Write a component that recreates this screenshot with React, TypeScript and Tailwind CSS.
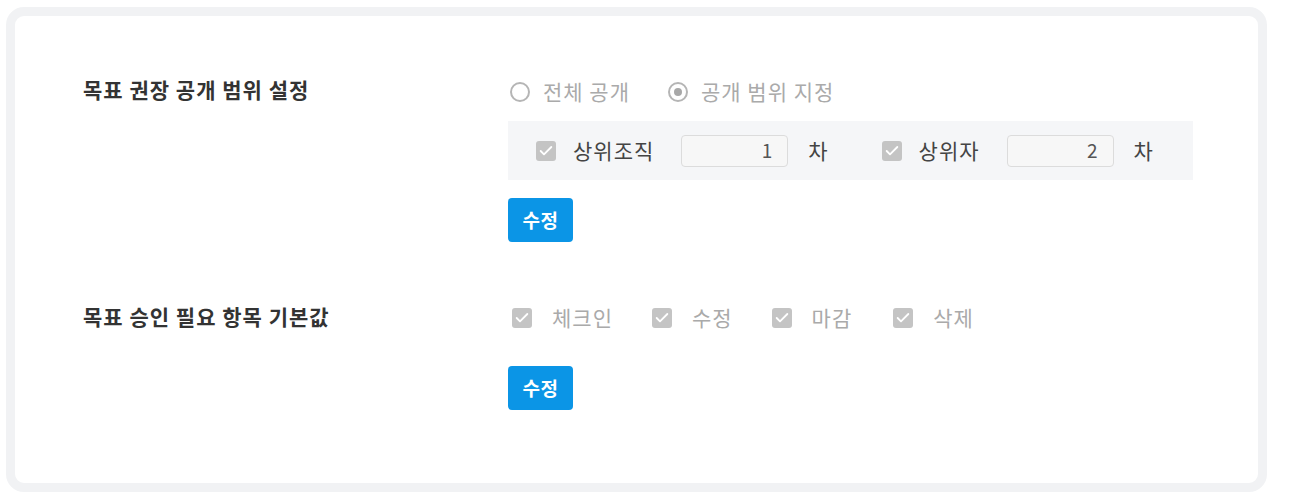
import { Check } from "lucide-react";

const font = { fontFamily: '"Noto Sans CJK KR", "Noto Sans", sans-serif' };

function Box({ className = "" }: { className?: string }) {
  return (
    <span className={`flex h-5 w-5 shrink-0 items-center justify-center rounded-[3px] bg-[#c4c4c4] ${className}`}>
      <Check size={16} strokeWidth={2.75} className="text-white" />
    </span>
  );
}

function Radio({ checked }: { checked?: boolean }) {
  return (
    <span className="flex h-5 w-5 shrink-0 items-center justify-center rounded-full border-2 border-[#b5b5b5] bg-white">
      {checked && <span className="h-2 w-2 rounded-full bg-[#a8a8a8]" />}
    </span>
  );
}

function EditButton() {
  return (
    <button className="flex h-[44px] w-[65px] items-center justify-center rounded-[4px] bg-[#0b95e6] text-[19px] font-bold tracking-[0.5px] text-white">
      수정
    </button>
  );
}

export default function App() {
  const approvals = [
    { label: "체크인", gap: "" },
    { label: "수정", gap: "ml-[39px]" },
    { label: "마감", gap: "ml-[39px]" },
    { label: "삭제", gap: "ml-[41px]" },
  ];

  return (
    <div className="min-h-screen bg-white pl-[6px] pt-[7px]" style={font}>
      <div className="h-[485px] w-[1261px] rounded-[18px] border-[9px] border-[#f1f2f4] bg-white">
        {/* 공개 범위 */}
        <div className="flex pl-[68px] pt-[59px]">
          <div className="w-[425px] text-[21px] font-bold leading-[28px] tracking-[1px] text-[#333]">
            목표 권장 공개 범위 설정
          </div>
          <div className="flex flex-col">
            <div className="mt-[3px] flex h-[28px] items-center pl-[2px] text-[21px] tracking-[1px] text-[#aaa]">
              <label className="flex items-center gap-[13px]">
                <Radio />
                전체 공개
              </label>
              <label className="ml-[38px] flex items-center gap-[13px]">
                <Radio checked />
                공개 범위 지정
              </label>
            </div>
            <div className="mt-[15px] flex h-[59px] w-[685px] items-center bg-[#f5f6f8] pl-[28px] text-[21px] tracking-[1px] text-[#444]">
              <Box />
              <span className="ml-[17px]">상위조직</span>
              <span className="ml-[27px] flex h-[32px] w-[107px] items-center justify-end rounded-[4px] border border-[#dcdcdc] bg-[#f7f7f7] pr-[14px] text-[19px] text-[#555]">
                1
              </span>
              <span className="ml-[20px]">차</span>
              <Box className="ml-[53px]" />
              <span className="ml-[17px]">상위자</span>
              <span className="ml-[27px] flex h-[32px] w-[107px] items-center justify-end rounded-[4px] border border-[#dcdcdc] bg-[#f7f7f7] pr-[14px] text-[19px] text-[#555]">
                2
              </span>
              <span className="ml-[20px]">차</span>
            </div>
            <div className="mt-[18px]">
              <EditButton />
            </div>
          </div>
        </div>

        {/* 승인 항목 */}
        <div className="mt-[60px] flex pl-[68px]">
          <div className="w-[425px] text-[21px] font-bold leading-[28px] tracking-[1px] text-[#333]">
            목표 승인 필요 항목 기본값
          </div>
          <div className="flex flex-col">
            <div className="mt-[2px] flex h-[28px] items-center pl-[4px] text-[21px] tracking-[1px] text-[#aaa]">
              {approvals.map((a) => (
                <label key={a.label} className={`flex items-center gap-[20px] ${a.gap}`}>
                  <Box />
                  {a.label}
                </label>
              ))}
            </div>
            <div className="mt-[34px]">
              <EditButton />
            </div>
          </div>
        </div>
      </div>
    </div>
  );
}
